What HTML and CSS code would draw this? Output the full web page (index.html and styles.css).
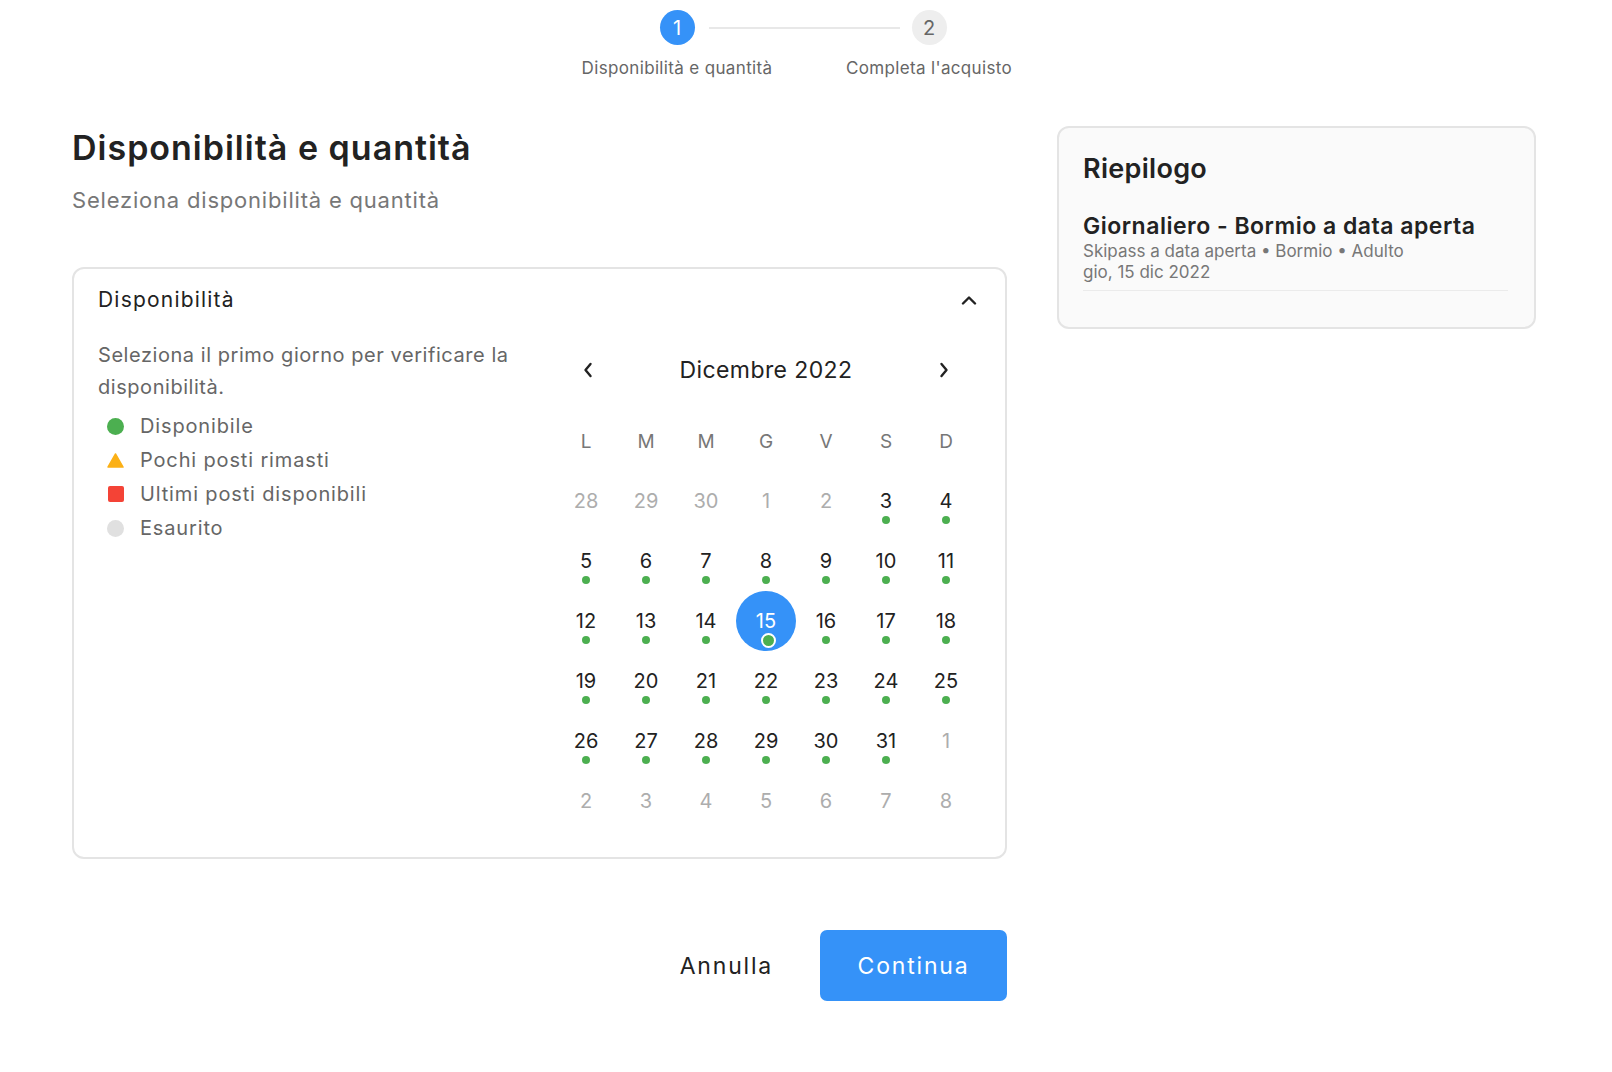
FILE: index.html
```html
<!DOCTYPE html>
<html lang="it">
  <head>
    <meta charset="UTF-8" />
    <meta name="viewport" content="width=device-width, initial-scale=1.0" />
    <title>Disponibilità e quantità</title>
    <link rel="stylesheet" href="styles.css">
  </head>
  <body>
    <div class="stepper">
      <div class="step active">
        <span class="step-num">1</span>
        <span class="step-label">Disponibilità e quantità</span>
      </div>
      <div class="step">
        <span class="step-num">2</span>
        <span class="step-label">Completa l'acquisto</span>
      </div>
    </div>

    <div class="page">
      <div class="main-col">
        <h1 class="title">Disponibilità e quantità</h1>
        <p class="subtitle">Seleziona disponibilità e quantità</p>

        <div class="panel">
          <div class="panel-header">
            <span>Disponibilità</span>
            <svg class="chevron" width="16" height="10" viewBox="0 0 16 10">
              <polyline points="2,8.5 8,2.5 14,8.5" />
            </svg>
          </div>

          <div class="panel-body">
            <div class="info">
              <p class="info-text">
                Seleziona il primo giorno per verificare la disponibilità.
              </p>
              <ul class="legend">
                <li><span class="mark mark-ok"></span>Disponibile</li>
                <li>
                  <svg class="mark" width="18" height="16" viewBox="0 0 18 16">
                    <path d="M9 1 L17 15 L1 15 Z" fill="#fbb016" stroke="#fbb016" stroke-linejoin="round" stroke-width="1.5" />
                  </svg>
                  Pochi posti rimasti
                </li>
                <li><span class="mark mark-few"></span>Ultimi posti disponibili</li>
                <li><span class="mark mark-out"></span>Esaurito</li>
              </ul>
            </div>

            <div class="calendar">
              <div class="cal-head">
                <button class="cal-nav" aria-label="Mese precedente">
                  <svg width="12" height="18" viewBox="0 0 12 18">
                    <polyline points="8.5,3 3.5,9 8.5,15" />
                  </svg>
                </button>
                <span class="cal-month">Dicembre 2022</span>
                <button class="cal-nav" aria-label="Mese successivo">
                  <svg width="12" height="18" viewBox="0 0 12 18">
                    <polyline points="3.5,3 8.5,9 3.5,15" />
                  </svg>
                </button>
              </div>

              <div class="cal-grid">
                <span class="wd">L</span>
                <span class="wd">M</span>
                <span class="wd">M</span>
                <span class="wd">G</span>
                <span class="wd">V</span>
                <span class="wd">S</span>
                <span class="wd">D</span>

                <span class="day muted">28</span>
                <span class="day muted">29</span>
                <span class="day muted">30</span>
                <span class="day muted">1</span>
                <span class="day muted">2</span>
                <span class="day free">3</span>
                <span class="day free">4</span>

                <span class="day free">5</span>
                <span class="day free">6</span>
                <span class="day free">7</span>
                <span class="day free">8</span>
                <span class="day free">9</span>
                <span class="day free">10</span>
                <span class="day free">11</span>

                <span class="day free">12</span>
                <span class="day free">13</span>
                <span class="day free">14</span>
                <span class="day free selected">15</span>
                <span class="day free">16</span>
                <span class="day free">17</span>
                <span class="day free">18</span>

                <span class="day free">19</span>
                <span class="day free">20</span>
                <span class="day free">21</span>
                <span class="day free">22</span>
                <span class="day free">23</span>
                <span class="day free">24</span>
                <span class="day free">25</span>

                <span class="day free">26</span>
                <span class="day free">27</span>
                <span class="day free">28</span>
                <span class="day free">29</span>
                <span class="day free">30</span>
                <span class="day free">31</span>
                <span class="day muted">1</span>

                <span class="day muted">2</span>
                <span class="day muted">3</span>
                <span class="day muted">4</span>
                <span class="day muted">5</span>
                <span class="day muted">6</span>
                <span class="day muted">7</span>
                <span class="day muted">8</span>
              </div>
            </div>
          </div>
        </div>

        <div class="actions">
          <button class="btn-cancel">Annulla</button>
          <button class="btn-continue">Continua</button>
        </div>
      </div>

      <aside class="summary">
        <h2 class="summary-title">Riepilogo</h2>
        <div class="summary-item">
          <h3>Giornaliero - Bormio a data aperta</h3>
          <p>Skipass a data aperta • Bormio • Adulto</p>
          <p>gio, 15 dic 2022</p>
        </div>
      </aside>
    </div>
  </body>
</html>
```

FILE: styles.css
```css
* {
  box-sizing: border-box;
  margin: 0;
  padding: 0;
}

body,
html {
  background-color: #fff;
  font-family: Inter, "Noto Sans", sans-serif;
  color: #222;
}

button {
  font-family: inherit;
  border: none;
  background: none;
  cursor: pointer;
}

/* stepper */

.stepper {
  display: flex;
  justify-content: center;
  padding: 10px 6px 0 0;
}

.step {
  position: relative;
  width: 252px;
  display: flex;
  flex-direction: column;
  align-items: center;
}

.step + .step::before {
  content: "";
  position: absolute;
  top: 17px;
  right: calc(50% + 29px);
  width: 191px;
  height: 2px;
  background-color: #e8e8e8;
}

.step-num {
  width: 35px;
  height: 35px;
  border-radius: 50%;
  background-color: #eeeeee;
  color: #666;
  font-size: 20px;
  display: flex;
  align-items: center;
  justify-content: center;
}

.step.active .step-num {
  background-color: #3592f8;
  color: #fff;
}

.step-label {
  margin-top: 13px;
  font-size: 17px;
  line-height: 20px;
  letter-spacing: 0.35px;
  color: #666;
}

/* layout */

.page {
  display: flex;
  gap: 50px;
  padding: 0 76px 0 72px;
  margin-top: 48px;
}

.main-col {
  flex: 1;
}

.title {
  margin-top: 2px;
  font-size: 34px;
  line-height: 40px;
  font-weight: 600;
  letter-spacing: 1px;
  color: #222;
}

.subtitle {
  margin-top: 17px;
  font-size: 22px;
  line-height: 30px;
  letter-spacing: 0.8px;
  color: #777;
}

/* panel */

.panel {
  margin-top: 52px;
  border: 2px solid #e4e4e4;
  border-radius: 12px;
}

.panel-header {
  display: flex;
  justify-content: space-between;
  align-items: center;
  padding: 18px 28px 18px 24px;
  font-size: 21px;
  line-height: 26px;
  letter-spacing: 1.2px;
  color: #222;
}

.chevron polyline,
.cal-nav polyline {
  fill: none;
  stroke: #222;
  stroke-width: 2.4;
  stroke-linecap: round;
  stroke-linejoin: round;
}

.panel-body {
  display: flex;
  gap: 26px;
  padding: 0 29px 26px 24px;
}

.info {
  flex: 1;
  padding-top: 8px;
}

.info-text {
  font-size: 20px;
  line-height: 32px;
  letter-spacing: 0.55px;
  color: #666;
}

.legend {
  list-style: none;
  margin-top: 6px;
}

.legend li {
  display: flex;
  align-items: center;
  height: 34px;
  font-size: 20px;
  letter-spacing: 0.85px;
  color: #666;
}

.mark {
  flex: none;
  width: 17px;
  height: 17px;
  margin: 0 16px 0 9px;
}

.mark-ok {
  border-radius: 50%;
  background-color: #4caf50;
}

.mark-few {
  width: 16px;
  height: 16px;
  margin-left: 10px;
  margin-right: 16px;
  border-radius: 2px;
  background-color: #f44336;
}

.mark-out {
  border-radius: 50%;
  background-color: #e0e0e0;
}

/* calendar */

.calendar {
  width: 420px;
  padding-top: 9px;
}

.cal-head {
  display: flex;
  justify-content: space-between;
  align-items: center;
  height: 60px;
}

.cal-nav {
  width: 64px;
  height: 40px;
  display: flex;
  align-items: center;
  justify-content: center;
}

.cal-month {
  font-size: 23px;
  letter-spacing: 0.4px;
  color: #222;
}

.cal-grid {
  display: grid;
  grid-template-columns: repeat(7, 60px);
  grid-auto-rows: 60px;
  margin-top: 11px;
}

.wd {
  display: flex;
  align-items: center;
  justify-content: center;
  font-size: 19px;
  color: #777;
}

.day {
  position: relative;
  display: flex;
  align-items: center;
  justify-content: center;
  font-size: 20px;
  color: #222;
  border-radius: 50%;
}

.day.muted {
  color: #adadad;
}

.day.free::after {
  content: "";
  position: absolute;
  top: 45px;
  left: 26px;
  width: 8px;
  height: 8px;
  border-radius: 50%;
  background-color: #4caf50;
}

.day.selected {
  background-color: #3592f8;
  color: #fff;
}

.day.selected::after {
  top: 42px;
  left: 25px;
  width: 11px;
  height: 11px;
  border: 2px solid #fff;
}

/* actions */

.actions {
  display: flex;
  justify-content: flex-end;
  align-items: center;
  margin-top: 71px;
}

.btn-cancel {
  height: 71px;
  padding: 0 24px;
  margin-right: 23px;
  font-size: 23px;
  letter-spacing: 1.8px;
  color: #222;
}

.btn-continue {
  width: 187px;
  height: 71px;
  border-radius: 7px;
  background-color: #3592f8;
  color: #fff;
  font-size: 23px;
  letter-spacing: 1.8px;
}

/* summary */

.summary {
  flex: 0 0 479px;
  align-self: flex-start;
  background-color: #fafafa;
  border: 2px solid #e4e4e4;
  border-radius: 12px;
  padding: 25px 26px 36px 24px;
}

.summary-title {
  font-size: 27px;
  line-height: 32px;
  font-weight: 600;
  letter-spacing: 0.3px;
  color: #222;
}

.summary-item {
  margin-top: 27px;
  padding-bottom: 7px;
  border-bottom: 1px solid #ebebeb;
}

.summary-item h3 {
  font-size: 23px;
  line-height: 28px;
  font-weight: 600;
  letter-spacing: 0.5px;
  color: #222;
  margin-bottom: 1px;
}

.summary-item p {
  font-size: 17px;
  line-height: 21px;
  color: #777;
}
```
